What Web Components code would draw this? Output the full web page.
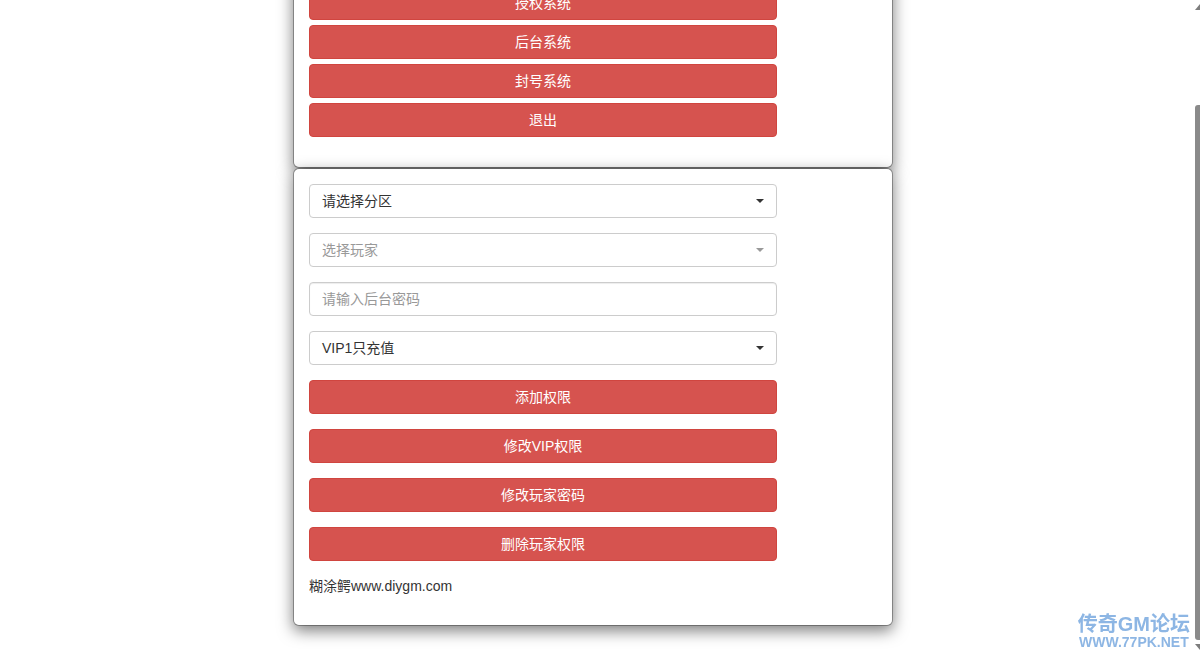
<!DOCTYPE html>
<html>
<head>
<meta charset="utf-8">
<title>GM</title>
<style>
  html, body { margin: 0; height: 100%; overflow: hidden; background: #fff; }
  body {
    font-family: "Liberation Sans", "Noto Sans CJK SC", sans-serif;
    font-size: 14px;
    color: #333;
  }
</style>
</head>
<body>

<app-page>
  <app-card class="top">
    <app-button>授权系统</app-button>
    <app-button>后台系统</app-button>
    <app-button>封号系统</app-button>
    <app-button>退出</app-button>
  </app-card>
  <app-card>
    <app-select>请选择分区</app-select>
    <app-select disabled>选择玩家</app-select>
    <app-input placeholder="请输入后台密码"></app-input>
    <app-select>VIP1只充值</app-select>
    <app-button>添加权限</app-button>
    <app-button>修改VIP权限</app-button>
    <app-button>修改玩家密码</app-button>
    <app-button>删除玩家权限</app-button>
    <p slot="foot">糊涂鳄www.diygm.com</p>
  </app-card>
</app-page>
<app-scrollbar></app-scrollbar>
<app-watermark></app-watermark>

<script>
class AppPage extends HTMLElement {
  connectedCallback() {
    this.attachShadow({ mode: 'open' }).innerHTML = `
      <style>
        :host { display: flex; flex-direction: column; align-items: center; margin-top: -30px; }
        .col { width: 600px; margin-left: -14px; display: flex; flex-direction: column; }
      </style>
      <div class="col"><slot></slot></div>`;
  }
}

class AppCard extends HTMLElement {
  connectedCallback() {
    this.attachShadow({ mode: 'open' }).innerHTML = `
      <style>
        :host {
          display: block;
          box-sizing: border-box;
          position: relative;
          background: #fff;
          border: 1px solid rgba(0,0,0,.3);
          border-radius: 6px;
          background-clip: padding-box;
          box-shadow: 0 5px 15px rgba(0,0,0,.5);
          padding: 15px 115px 15px 15px;
        }
        :host(.top) { height: 198px; }
        .stack { display: flex; flex-direction: column; gap: 15px; }
        :host(.top) .stack { gap: 5px; }
        ::slotted(p) { margin: 15px 0 14px; line-height: 20px; font-size: 14px; }
      </style>
      <div class="stack"><slot></slot></div>
      <slot name="foot"></slot>`;
  }
}

class AppButton extends HTMLElement {
  connectedCallback() {
    this.attachShadow({ mode: 'open' }).innerHTML = `
      <style>
        :host { display: block; }
        button {
          display: block;
          box-sizing: border-box;
          width: 100%;
          height: 34px;
          padding: 0 12px;
          font: inherit;
          line-height: 32px;
          color: #fff;
          background: #d6534f;
          border: 1px solid #d0453f;
          border-radius: 4px;
        }
      </style>
      <button type="button"><slot></slot></button>`;
  }
}

class AppSelect extends HTMLElement {
  connectedCallback() {
    this.attachShadow({ mode: 'open' }).innerHTML = `
      <style>
        :host { display: block; }
        .box {
          box-sizing: border-box;
          height: 34px;
          display: flex;
          align-items: center;
          justify-content: space-between;
          padding: 0 12px;
          border: 1px solid #ccc;
          border-radius: 4px;
          background: #fff;
          color: #333;
          line-height: 20px;
        }
        .caret {
          width: 0;
          height: 0;
          border-top: 4px solid #333;
          border-left: 4px solid transparent;
          border-right: 4px solid transparent;
        }
        :host([disabled]) .box { color: #999; }
        :host([disabled]) .caret { border-top-color: #999; }
      </style>
      <div class="box"><span><slot></slot></span><i class="caret"></i></div>`;
  }
}

class AppInput extends HTMLElement {
  connectedCallback() {
    this.attachShadow({ mode: 'open' }).innerHTML = `
      <style>
        :host { display: block; }
        input {
          display: block;
          box-sizing: border-box;
          width: 100%;
          height: 34px;
          padding: 0 12px;
          font: inherit;
          color: #555;
          background: #fff;
          border: 1px solid #ccc;
          border-radius: 4px;
          outline: 0;
          box-shadow: inset 0 1px 1px rgba(0,0,0,.075);
        }
        input::placeholder { color: #999; opacity: 1; }
      </style>
      <input type="text">`;
    this.shadowRoot.querySelector('input').placeholder = this.getAttribute('placeholder') || '';
  }
}

// the browser scrollbar is cut off at the window edge in the screenshot
class AppScrollbar extends HTMLElement {
  connectedCallback() {
    this.attachShadow({ mode: 'open' }).innerHTML = `
      <style>
        :host { position: fixed; top: 0; right: 0; bottom: 0; width: 5px; overflow: hidden; }
        .up, .down { position: absolute; left: 0; width: 10px; height: 6px; background: #7d7d7d; }
        .up { top: 4px; clip-path: polygon(50% 0, 100% 100%, 0 100%); }
        .down { top: 644px; clip-path: polygon(0 0, 100% 0, 50% 100%); }
        .thumb { position: absolute; left: 0; top: 105px; width: 12px; height: 535px; background: #8a8a8a; border-radius: 3px; }
      </style>
      <div class="up"></div><div class="thumb"></div><div class="down"></div>`;
  }
}

class AppWatermark extends HTMLElement {
  connectedCallback() {
    this.attachShadow({ mode: 'open' }).innerHTML = `
      <style>
        :host {
          position: fixed;
          right: 10px;
          bottom: 6px;
          display: flex;
          flex-direction: column;
          align-items: center;
          color: #8db6e4;
          font-weight: bold;
          font-family: "Liberation Sans", "Noto Sans CJK SC", sans-serif;
        }
        .a { font-size: 20px; line-height: 20px; white-space: nowrap; }
        .b { font-size: 14px; line-height: 16px; white-space: nowrap; }
      </style>
      <div class="a">传奇GM论坛</div>
      <div class="b">WWW.77PK.NET</div>`;
  }
}

customElements.define('app-page', AppPage);
customElements.define('app-card', AppCard);
customElements.define('app-button', AppButton);
customElements.define('app-select', AppSelect);
customElements.define('app-input', AppInput);
customElements.define('app-scrollbar', AppScrollbar);
customElements.define('app-watermark', AppWatermark);
</script>
</body>
</html>
